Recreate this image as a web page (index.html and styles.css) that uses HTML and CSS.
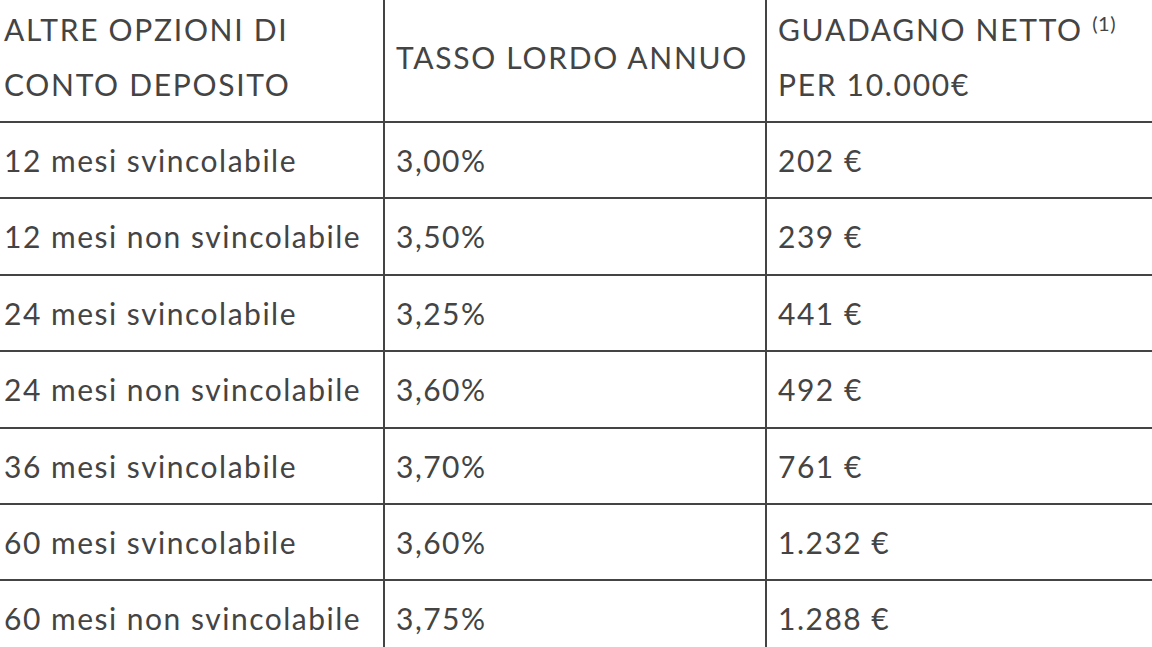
FILE: index.html
```html
<!DOCTYPE html>
<html lang="it">
<head>
<meta charset="utf-8">
<title>Conto deposito</title>
<link rel="stylesheet" href="styles.css">
</head>
<body>
<table class="rates">
  <colgroup>
    <col class="c1"><col class="c2"><col class="c3">
  </colgroup>
  <thead>
    <tr>
      <th>ALTRE OPZIONI DI CONTO DEPOSITO</th>
      <th>TASSO LORDO ANNUO</th>
      <th>GUADAGNO NETTO <sup>(1)</sup> PER 10.000€</th>
    </tr>
  </thead>
  <tbody>
    <tr><td>12 mesi svincolabile</td><td>3,00%</td><td>202 €</td></tr>
    <tr><td>12 mesi non svincolabile</td><td>3,50%</td><td>239 €</td></tr>
    <tr><td>24 mesi svincolabile</td><td>3,25%</td><td>441 €</td></tr>
    <tr><td>24 mesi non svincolabile</td><td>3,60%</td><td>492 €</td></tr>
    <tr><td>36 mesi svincolabile</td><td>3,70%</td><td>761 €</td></tr>
    <tr><td>60 mesi svincolabile</td><td>3,60%</td><td>1.232 €</td></tr>
    <tr><td>60 mesi non svincolabile</td><td>3,75%</td><td>1.288 €</td></tr>
  </tbody>
</table>
</body>
</html>
```
FILE: styles.css
```css
html, body {
  margin: 0;
  padding: 0;
  background: #ffffff;
  overflow: hidden;
}
.rates {
  border-collapse: collapse;
  table-layout: fixed;
  width: 1164px;
  margin: -9px 0 0 -9px;
  font-family: Lato, "Liberation Sans", sans-serif;
  font-size: 30px;
  letter-spacing: 1.5px;
  color: #444444;
}
.c1 { width: 392px; }
.c2 { width: 382px; }
.c3 { width: 390px; }
.rates th,
.rates td {
  border: 2px solid #444444;
  padding: 10px 8px 10px 11px;
  line-height: 54.4px;
  text-align: left;
  font-weight: 400;
  vertical-align: middle;
}
.rates th {
  padding-top: 9px;
  padding-bottom: 9px;
  line-height: 55px;
  letter-spacing: 1.7px;
}
.rates sup {
  font-size: 20px;
  letter-spacing: 0.5px;
  line-height: 0;
  vertical-align: 0.5em;
}
```
